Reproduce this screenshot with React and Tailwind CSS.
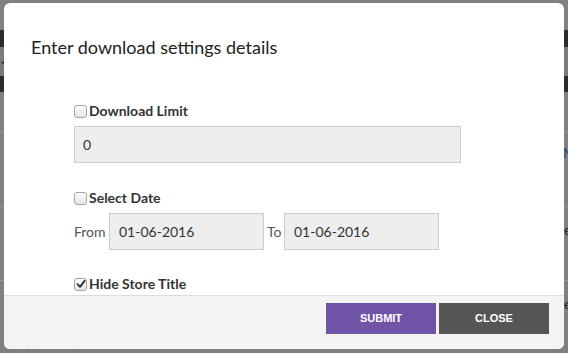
import React from "react";

function Box({ checked }) {
  return (
    <span className="relative inline-flex h-[13px] w-[13px] shrink-0 items-center justify-center rounded-[3px] border border-[#a6a6a6] bg-gradient-to-b from-[#fdfdfd] to-[#e4e4e4]">
      {checked && (
        <svg width="10" height="10" viewBox="0 0 10 10" className="block">
          <path d="M1.5 5.2 L4 7.8 L8.6 1.8" fill="none" stroke="#333" strokeWidth="1.9" strokeLinecap="round" strokeLinejoin="round" />
        </svg>
      )}
    </span>
  );
}

function CheckRow({ label, checked, className }) {
  return (
    <div className={"flex h-4 items-center gap-[2px] " + className}>
      <Box checked={checked} />
      <span className="text-[14px] font-bold leading-4 text-[#333]">{label}</span>
    </div>
  );
}

export default function App() {
  return (
    <div
      className="relative h-[353px] w-[568px] overflow-hidden bg-[#808080]"
      style={{ fontFamily: "Lato, 'Liberation Sans', sans-serif" }}
    >
      {/* dimmed page behind */}
      <div className="flex h-full w-full flex-col">
        <div className="h-[30px]" />
        <div className="flex h-[62px] flex-col">
          <div className="h-[17px] bg-[#2c2c2c]" />
          <div className="flex h-[29px] items-center bg-[#7a7a7a] text-[14px] leading-none text-[#2c2c2c]">&lt;</div>
          <div className="h-[16px] bg-[#2c2c2c]" />
        </div>
        <div className="h-[41px] border-b border-[#939393]" />
        <div className="h-[74px] border-b border-[#939393]" />
        <div className="h-[74px] border-b border-[#939393]" />
        <div className="flex flex-1">
          <div className="w-[27px]" />
          <div className="w-[10px] border-l border-[#6e6e6e]" />
          <div className="w-[37px] border-l border-[#6e6e6e]" />
          <div className="border-l border-[#6e6e6e]" />
        </div>
      </div>
      <span className="absolute left-[563px] top-[145px] text-[14px] leading-4 text-[#1e4d80]">M</span>
      <span className="absolute left-[564px] top-[222px] text-[14px] leading-4 text-[#222]">e</span>
      <span className="absolute left-[564px] top-[296px] text-[14px] leading-4 text-[#222]">e</span>

      {/* modal */}
      <div className="absolute left-[4px] top-[3px] flex h-[346px] w-[560px] flex-col overflow-hidden rounded-[6px] bg-white">
        <div className="pl-[27px] pt-[33px]">
          <h2 className="text-[18px] font-normal leading-[22px] text-[#222]">Enter download settings details</h2>
        </div>
        <div className="flex-1 overflow-hidden pl-[70px]">
          <CheckRow label="Download Limit" className="mt-[45px]" />
          <div className="mt-[7px] flex h-[37px] w-[387px] items-center border border-[#cccccc] bg-[#eeeeee] pl-[8px] text-[14px] text-[#333]">
            0
          </div>
          <CheckRow label="Select Date" className="mt-[27px]" />
          <div className="mt-[7px] flex h-[37px] items-center">
            <span className="w-[35px] text-[14px] text-[#555]">From</span>
            <div className="flex h-[37px] w-[155px] items-center border border-[#cccccc] bg-[#eeeeee] pl-[9px] text-[14px] text-[#333]">
              01-06-2016
            </div>
            <span className="w-[20px] pl-[3px] text-[14px] text-[#555]">To</span>
            <div className="flex h-[37px] w-[155px] items-center border border-[#cccccc] bg-[#eeeeee] pl-[9px] text-[14px] text-[#333]">
              01-06-2016
            </div>
          </div>
          <CheckRow label="Hide Store Title" checked className="mt-[26px]" />
        </div>
        <div className="flex h-[54px] shrink-0 justify-end gap-[3px] border-t border-[#dddddd] bg-[#f4f4f4] pr-[15px] pt-[7px]">
          <button
            className="h-[31px] w-[110px] bg-[#7153a8] text-[11px] font-bold uppercase text-white"
            style={{ fontFamily: "'Liberation Sans', Arial, sans-serif" }}
          >
            Submit
          </button>
          <button
            className="h-[31px] w-[110px] bg-[#555555] text-[11px] font-bold uppercase text-white"
            style={{ fontFamily: "'Liberation Sans', Arial, sans-serif" }}
          >
            Close
          </button>
        </div>
      </div>
    </div>
  );
}
